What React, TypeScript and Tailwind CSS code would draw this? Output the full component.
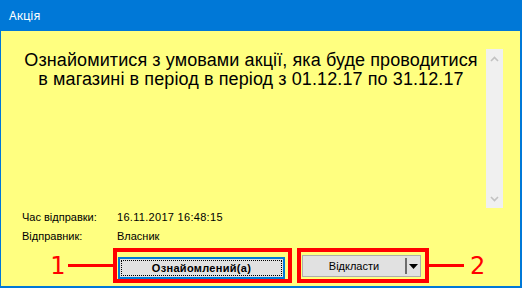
import React from 'react'

const RED = 'bg-[#ff0000]'

function Chevron({ up }: { up?: boolean }) {
  return (
    <svg width="9" height="6" viewBox="0 0 9 6" className="block">
      <polyline
        points={up ? '1,5 4.5,1.5 8,5' : '1,1 4.5,4.5 8,1'}
        fill="none"
        stroke="#c2c2c2"
        strokeWidth="1.6"
      />
    </svg>
  )
}

export default function App() {
  return (
    <div className="w-[522px] h-[288px] flex flex-col" style={{ fontFamily: '"Liberation Sans", Arial, sans-serif' }}>
      {/* title bar */}
      <div
        className="h-[31px] shrink-0 bg-[#0078d7] text-white text-[12px] flex items-center pl-[9px]"
        style={{ fontFamily: '"Noto Sans", "Open Sans", sans-serif' }}
      >
        Акція
      </div>

      <div className="flex-1 flex flex-col bg-[#ffff80] border-l border-r-2 border-b-2 border-[#0078d7]">
        {/* message + scrollbar */}
        <div className="mt-[18px] flex h-[159px] shrink-0">
          <div className="flex-1 ml-[15px] pt-[2px] text-[18px] leading-[19px] tracking-[0.1px] text-black text-center">
            Ознайомитися з умовами акції, яка буде проводитися
            <br />
            в магазині в період в період з 01.12.17 по 31.12.17
          </div>
          <div className="w-[17px] mr-[17px] bg-[#f0f0f0] flex flex-col items-center justify-between pt-[7px] pb-[6px]">
            <Chevron up />
            <Chevron />
          </div>
        </div>

        {/* details */}
        <div className="pl-[21px] text-[11px] leading-[19px] text-black">
          <div className="flex">
            <span className="w-[95px]">Час відправки:</span>
            <span className="tracking-[0.3px]">16.11.2017 16:48:15</span>
          </div>
          <div className="flex">
            <span className="w-[95px]">Відправник:</span>
            <span>Власник</span>
          </div>
        </div>

        {/* buttons with annotations */}
        <div className="mt-[2px] pl-[47px] flex items-center h-[35px]">
          <span
            className="w-[20px] text-center text-[24px] leading-none text-[#ff0000]"
            style={{ fontFamily: '"DejaVu Sans", sans-serif' }}
          >
            1
          </span>
          <div className={`w-[45px] h-[3px] ${RED}`} />
          <div className="box-border w-[179px] h-[35px] border-4 border-[#ff0000] pl-[1px] pt-[3px]">
            <button className="box-border w-[167px] h-[22px] border-2 border-[#0078d7] bg-[#e1e1e1] p-[1px]">
              <div className="h-full border border-dotted border-black flex items-center justify-center text-[11px] font-bold tracking-[0.3px] text-black">
                Ознайомлений(а)
              </div>
            </button>
          </div>
          <div className="w-[5px]" />
          <div className="box-border w-[132px] h-[35px] border-4 border-[#ff0000] pl-[1px] pt-[3px]">
            <button className="box-border w-[119px] h-[22px] border border-[#adadad] bg-[#e1e1e1] flex items-center">
              <span className="flex-1 text-center text-[11px] text-black">Відкласти</span>
              <span className="w-[2px] h-[16px] bg-[#6d6d6d]" />
              <span className="w-[13px] flex justify-center">
                <svg width="9" height="5" viewBox="0 0 9 5">
                  <polygon points="0,0 9,0 4.5,5" fill="#000" />
                </svg>
              </span>
            </button>
          </div>
          <div className={`w-[35px] h-[3px] ${RED}`} />
          <span
            className="ml-[6px] text-[24px] leading-none text-[#ff0000]"
            style={{ fontFamily: '"DejaVu Sans", sans-serif' }}
          >
            2
          </span>
        </div>
      </div>
    </div>
  )
}
